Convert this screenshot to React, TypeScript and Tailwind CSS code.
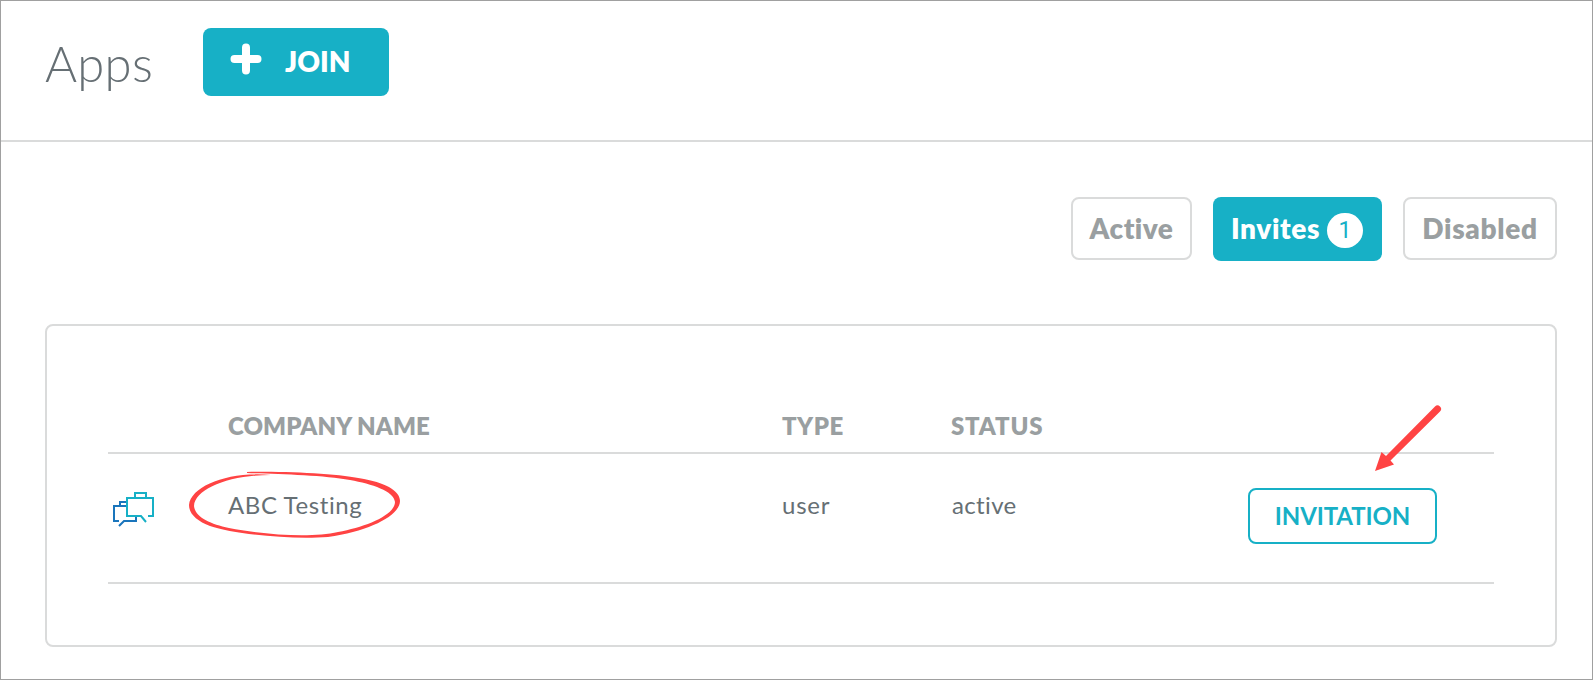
import React from "react";

function Chats() {
  return (
    <svg width="44" height="36" viewBox="0 0 44 36" fill="none" strokeWidth="2">
      <path d="M8 13V10H15M15 14H2V29H7M7 34L12 29H24V25" stroke="#1a75bc" />
      <path d="M23 6V1H34V6M36 24H41V6H15V24H29L34 30" stroke="#17b0c6" />
    </svg>
  );
}

function Th({ w, x, children }: { w: string; x: string; children: string }) {
  return (
    <div className={w}>
      <span className={`block whitespace-nowrap text-[24px] font-extrabold leading-[30px] text-[#9a9fa1] ${x}`}>{children}</span>
    </div>
  );
}

export default function App() {
  return (
    <div className="relative h-[680px] w-[1593px] overflow-hidden border border-[#a0a0a0] bg-white font-['Lato',sans-serif] text-[#666f74] [font-variant-ligatures:none]">
      <header className="flex h-[141px] items-start border-b-2 border-[#dadbdb] pl-[44px]">
        <h1 className="mt-[32px] w-[158px] text-[49px] font-light leading-[61px] tracking-[0.3px]">Apps</h1>
        <button className="mt-[27px] flex h-[68px] w-[186px] rounded-[8px] bg-[#17b0c6] pl-[27px] text-left text-white">
          <svg className="mt-[15px]" width="32" height="32" viewBox="0 0 32 32" stroke="currentColor" strokeWidth="8" strokeLinecap="round">
            <path d="M16 4.5v23M4.5 16h23" />
          </svg>
          <span className="ml-[23px] mt-[15px] text-[28px] font-extrabold leading-[36px]">JOIN</span>
        </button>
      </header>
      <nav className="mt-[55px] flex items-start justify-end gap-[21px] pr-[35px] text-[28px] font-extrabold leading-[36px] text-[#9a9fa1]">
        <button className="flex h-[63px] w-[121px] justify-center rounded-[8px] border-2 border-[#dadbdb] pt-[11px] tracking-[0.45px]">Active</button>
        <button className="flex h-[64px] w-[169px] rounded-[8px] bg-[#17b0c6] pl-[18px] pt-[13px] text-left text-white">
          <span className="w-[96px] tracking-[0.6px]">Invites</span>
          <span className="mt-[3px] flex h-[35px] w-[36px] items-center justify-center rounded-full bg-white font-['Roboto',sans-serif] text-[23px] font-normal text-[#17b0c6]">1</span>
        </button>
        <button className="flex h-[63px] w-[154px] justify-center rounded-[8px] border-2 border-[#dadbdb] pt-[11px] tracking-[0.7px]">Disabled</button>
      </nav>
      <main className="ml-[44px] mt-[63px] h-[323px] w-[1512px] rounded-[8px] border-2 border-[#dadbdb] px-[61px] pt-[84px]">
        <div className="flex h-[44px] border-b-2 border-[#dadbdb] pl-[120px] pt-px">
          <Th w="w-[554px]" x="tracking-[0.1px]">COMPANY NAME</Th>
          <Th w="w-[169px]" x="tracking-[0.5px]">TYPE</Th>
          <Th w="w-[200px]" x="tracking-[0.8px]">STATUS</Th>
        </div>
        <div className="flex h-[130px] border-b-2 border-[#dadbdb] pl-[4px] text-[24px] leading-[30px]">
          <div className="mt-[38px] w-[116px]"><Chats /></div>
          <div className="mt-[36px] w-[554px] tracking-[0.6px]">ABC Testing</div>
          <div className="mt-[36px] w-[170px] tracking-[0.8px]">user</div>
          <div className="mt-[36px] w-[296px] tracking-[0.35px]">active</div>
          <button className="mt-[34px] flex h-[56px] w-[189px] justify-center rounded-[8px] border-2 border-[#17b0c6] pt-[11px] font-bold tracking-[-0.1px] text-[#17b0c6]">INVITATION</button>
        </div>
      </main>
      <svg className="pointer-events-none absolute -left-px -top-px" width="1593" height="680" fill="#ff4343">
        <path fillRule="evenodd" d="M247 472C290 471 340 474 364 479C389 484 400 492 400 501C400 515 371 531 328 537C290 540 233 534 210 526C197 521 189 514 189 505C191 486 229 471 271 475C229 475 195 489 194 506C195 517 210 524 229 528C265 535 312 538 338 532C366 527 395 515 395 502C394 491 372 484 350 480C323 475 278 474 247 473Z" />
        <path d="M1375 471L1381.5 452L1386 456L1435 406.5A3.5 3.5 0 0 1 1440 411.5L1390.5 460.5L1394 464.5Z" />
      </svg>
    </div>
  );
}
